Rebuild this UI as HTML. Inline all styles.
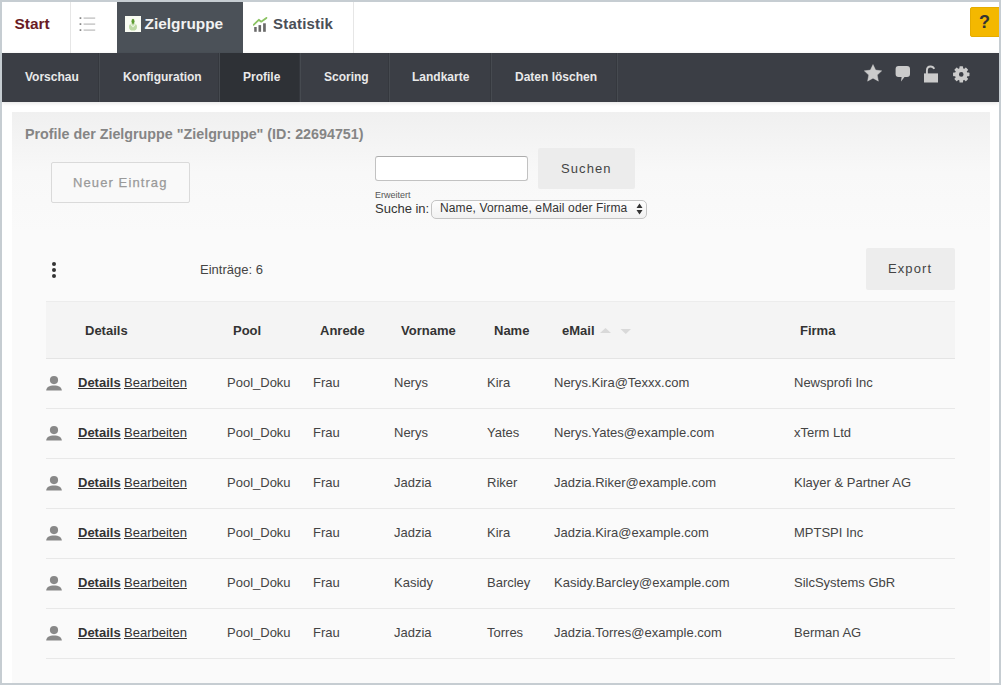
<!DOCTYPE html>
<html><head><meta charset="utf-8">
<style>
*{box-sizing:border-box;margin:0;padding:0}
html,body{width:1001px;height:685px;overflow:hidden;background:#fff;font-family:"Liberation Sans",sans-serif}
#frame{position:absolute;left:0;top:0;width:1001px;height:685px;border:2px solid #c6cdd2;background:#fff;overflow:hidden}
.abs{position:absolute;white-space:nowrap}
#topbar{position:absolute;left:0;top:0;width:997px;height:51px;background:#fff}
#nav{position:absolute;left:0;top:51px;width:997px;height:49px;background:#3b3e45;box-shadow:0 1px 4px rgba(0,0,0,0.12);z-index:2}
.navsep{position:absolute;top:0;width:1px;height:49px;background:#464a50;box-shadow:-1px 0 0 #35383e}
.navt{position:absolute;top:16.5px;font-size:12px;font-weight:bold;color:#e9e9e9;line-height:14px}
#panel{position:absolute;left:10px;top:110px;width:978px;height:571px;background:linear-gradient(#f0f0f0 0px,#f8f8f8 60px,#fafafa 120px,#fafafa 100%)}
.btn{position:absolute;background:#ededed;font-size:13px;color:#444;letter-spacing:1px;text-align:center}
.th{position:absolute;top:23px;font-size:13px;font-weight:bold;color:#333;line-height:15px}
.row{position:absolute;left:34px;width:910px;height:50px;border-bottom:1px solid #e6e6e6}
.td{position:absolute;top:12px;font-size:13px;color:#444;line-height:15px}
.lnk{text-decoration:underline;color:#333}
</style></head><body>
<div id="frame">
  <div id="topbar">
    <div class="abs" style="left:12.5px;top:12.5px;font-size:15.4px;font-weight:bold;color:#6a1b24;line-height:17px">Start</div>
    <div class="abs" style="left:68px;top:0;width:1px;height:51px;background:#e6e6e6"></div>
    <!-- list icon -->
    <svg class="abs" style="left:76px;top:13px" width="18" height="17" viewBox="0 0 18 17">
      <rect x="1.6" y="2.2" width="1.7" height="1.8" fill="#8a8a8a"/><rect x="5.6" y="2.5" width="11.6" height="1.2" fill="#b9b9b9"/>
      <rect x="1.6" y="8.2" width="1.7" height="1.8" fill="#8a8a8a"/><rect x="5.6" y="8.5" width="11.6" height="1.2" fill="#b9b9b9"/>
      <rect x="1.6" y="14.2" width="1.7" height="1.8" fill="#8a8a8a"/><rect x="5.6" y="14.5" width="11.6" height="1.2" fill="#b9b9b9"/>
    </svg>
    <div class="abs" style="left:115px;top:0;width:126px;height:51px;background:#4b5158"></div>
    <svg class="abs" style="left:123px;top:14px" width="16" height="16" viewBox="0 0 16 16">
      <rect width="16" height="16" fill="#f9fcf3"/>
      <ellipse cx="8" cy="10.9" rx="4" ry="3.7" fill="#bcd9a4"/>
      <path d="M5.6 8.2 L8 10.8 L10.4 8.2" stroke="#eef6e6" stroke-width="1.1" fill="none"/>
      <ellipse cx="8" cy="5.3" rx="1.5" ry="2.6" fill="#5c9b30"/>
    </svg>
    <div class="abs" style="left:142.5px;top:12.5px;font-size:15.4px;font-weight:bold;color:#f2f2f2;line-height:17px">Zielgruppe</div>
    <svg class="abs" style="left:251px;top:15px" width="16" height="16" viewBox="0 0 16 16">
      <rect x="1.2" y="10" width="2.5" height="4.8" fill="#6a6a6a"/><rect x="5.5" y="8.1" width="2.6" height="6.7" fill="#6a6a6a"/><rect x="10.1" y="6.3" width="2.7" height="8.5" fill="#6a6a6a"/>
      <path d="M0.6 7.8 L5.8 2.8 L8.2 4.7 L13.4 0.9" stroke="#8cc363" stroke-width="1.8" fill="none" stroke-linejoin="round" stroke-linecap="round"/>
    </svg>
    <div class="abs" style="left:271px;top:13px;font-size:15px;font-weight:bold;color:#4a4f57;line-height:17px;letter-spacing:0.2px">Statistik</div>
    <div class="abs" style="left:351px;top:0;width:1px;height:51px;background:#e6e6e6"></div>
    <div class="abs" style="left:968px;top:5px;width:32px;height:30px;background:#f4b800;border-radius:2px;border:1px solid #e5ac00"></div>
    <div class="abs" style="left:977px;top:10px;font-size:18px;font-weight:bold;color:#333;line-height:20px">?</div>
  </div>
  <div id="nav">
    <div class="navt" style="left:23px">Vorschau</div>
    <div class="navsep" style="left:97px"></div>
    <div class="navt" style="left:121px">Konfiguration</div>
    <div class="navsep" style="left:217px"></div>
    <div class="abs" style="left:218px;top:0;width:80px;height:49px;background:#2e3136"></div>
    <div class="navt" style="left:241px">Profile</div>
    <div class="navsep" style="left:298px"></div>
    <div class="navt" style="left:322px">Scoring</div>
    <div class="navsep" style="left:387px"></div>
    <div class="navt" style="left:410px">Landkarte</div>
    <div class="navsep" style="left:489px"></div>
    <div class="navt" style="left:513px">Daten löschen</div>
    <div class="navsep" style="left:615px"></div>
    <svg class="abs" style="left:861px;top:11px" width="20" height="19" viewBox="0 0 20 19"><path d="M10.00 0.50 L12.65 6.06 L18.75 6.86 L14.28 11.09 L15.41 17.14 L10.00 14.20 L4.59 17.14 L5.72 11.09 L1.25 6.86 L7.35 6.06 Z" fill="#cbcbcb" stroke="#cbcbcb" stroke-width="0.4" stroke-linejoin="round"/></svg>
    <svg class="abs" style="left:893px;top:12px" width="16" height="17" viewBox="0 0 16 17"><path d="M3.5 1 H12 Q15 1 15 4 V9 Q15 12 12 12 H9.5 L6 16.5 L6.6 12 H3.5 Q0.6 12 0.6 9 V4 Q0.6 1 3.5 1 Z" fill="#cbcbcb"/></svg>
    <svg class="abs" style="left:921px;top:12px" width="17" height="18" viewBox="0 0 17 18"><path d="M3.9 9 V5.4 Q3.9 1.5 7.6 1.5 Q10.3 1.5 11.2 3.8" stroke="#cbcbcb" stroke-width="1.9" fill="none"/><rect x="1" y="8.4" width="14" height="9.1" fill="#cbcbcb"/></svg>
    <svg class="abs" style="left:951px;top:13px" width="18" height="18" viewBox="0 0 18 18"><g fill="#cbcbcb"><rect x="6.45" y="0.20" width="3.6" height="4" rx="0.6" transform="rotate(0 8.25 8.4)"/><rect x="6.45" y="0.20" width="3.6" height="4" rx="0.6" transform="rotate(45 8.25 8.4)"/><rect x="6.45" y="0.20" width="3.6" height="4" rx="0.6" transform="rotate(90 8.25 8.4)"/><rect x="6.45" y="0.20" width="3.6" height="4" rx="0.6" transform="rotate(135 8.25 8.4)"/><rect x="6.45" y="0.20" width="3.6" height="4" rx="0.6" transform="rotate(180 8.25 8.4)"/><rect x="6.45" y="0.20" width="3.6" height="4" rx="0.6" transform="rotate(225 8.25 8.4)"/><rect x="6.45" y="0.20" width="3.6" height="4" rx="0.6" transform="rotate(270 8.25 8.4)"/><rect x="6.45" y="0.20" width="3.6" height="4" rx="0.6" transform="rotate(315 8.25 8.4)"/></g><circle cx="8.25" cy="8.4" r="4.3" fill="none" stroke="#cbcbcb" stroke-width="4"/></svg>

  </div>
  <div id="panel">
<div class="abs" style="left:13px;top:14px;font-size:14.3px;font-weight:bold;color:#858585;line-height:16px">Profile der Zielgruppe "Zielgruppe" (ID: 22694751)</div>
<div class="abs" style="left:39px;top:50px;width:139px;height:41px;border:1px solid #dadada;border-radius:2px;background:#f9f9f9"></div>
<div class="abs" style="left:61px;top:62.5px;font-size:13px;color:#9a9a9a;letter-spacing:1.1px;-webkit-text-stroke:0.25px #9a9a9a;line-height:15px">Neuer Eintrag</div>
<div class="abs" style="left:362.5px;top:44px;width:153.5px;height:25px;border:1px solid #c2c2c2;border-top-color:#acacac;border-radius:3px;background:#fff"></div>
<div class="abs" style="left:526px;top:36px;width:97px;height:41px;background:#ececec;border-radius:2px"></div>
<div class="abs" style="left:549px;top:49px;font-size:13px;color:#444;letter-spacing:1.1px;line-height:15px">Suchen</div>
<div class="abs" style="left:363px;top:78px;font-size:9px;color:#555;line-height:10px">Erweitert</div>
<div class="abs" style="left:363px;top:89px;font-size:13px;color:#333;line-height:15px">Suche in:</div>
<div class="abs" style="left:419px;top:88px;width:216px;height:19px;border:1px solid #c4c4c4;border-radius:5px;background:linear-gradient(#fdfdfd,#f1f1f1)"></div>
<div class="abs" style="left:428px;top:89px;font-size:12px;letter-spacing:0.13px;color:#333;line-height:14px">Name, Vorname, eMail oder Firma</div>
<svg class="abs" style="left:624px;top:91px" width="7" height="12" viewBox="0 0 7 12"><path d="M3.5 0.5 L6.5 5 L0.5 5 Z M0.5 7 L6.5 7 L3.5 11.5 Z" fill="#333"/></svg>
<div class="abs" style="left:40px;top:149.6px;width:4px;height:4px;border-radius:50%;background:#333"></div>
<div class="abs" style="left:40px;top:156.0px;width:4px;height:4px;border-radius:50%;background:#333"></div>
<div class="abs" style="left:40px;top:162.0px;width:4px;height:4px;border-radius:50%;background:#333"></div>
<div class="abs" style="left:188px;top:150px;font-size:13px;color:#444;line-height:15px">Einträge: 6</div>
<div class="abs" style="left:854px;top:136px;width:89px;height:42px;background:#ededed;border-radius:2px"></div>
<div class="abs" style="left:876px;top:149px;font-size:13px;color:#444;letter-spacing:1.1px;line-height:15px">Export</div>
<div class="abs" style="left:34px;top:189px;width:909px;height:58px;background:#f4f4f4;border-top:1px solid #ececec;border-bottom:1px solid #e4e4e4"></div>
<div class="th" style="left:73px;top:211px">Details</div>
<div class="th" style="left:221px;top:211px">Pool</div>
<div class="th" style="left:308px;top:211px">Anrede</div>
<div class="th" style="left:389px;top:211px">Vorname</div>
<div class="th" style="left:482px;top:211px">Name</div>
<div class="th" style="left:550px;top:211px">eMail</div>
<div class="th" style="left:788px;top:211px">Firma</div>
<svg class="abs" style="left:588px;top:215px" width="32" height="8" viewBox="0 0 32 8"><path d="M0 6 L5.5 1 L11 6 Z" fill="#d9d9d9"/><path d="M20.5 2 L31 2 L25.75 7 Z" fill="#d9d9d9"/></svg>
<div class="abs" style="left:34px;top:296px;width:909px;height:1px;background:#e8e8e8"></div>
<svg class="abs" style="left:34px;top:264px" width="16" height="15" viewBox="0 0 16 15"><circle cx="8" cy="4.1" r="4.1" fill="#888"/><path d="M0.2 14.5 C0.2 11.3 3.2 9.4 8 9.4 C12.8 9.4 15.8 11.3 15.8 14.5 Z" fill="#888"/></svg>
<div class="td" style="left:66px;top:263px"><span class="lnk" style="font-weight:bold">Details</span></div>
<div class="td" style="left:112px;top:263px"><span class="lnk">Bearbeiten</span></div>
<div class="td" style="left:215px;top:263px">Pool_Doku</div>
<div class="td" style="left:301px;top:263px">Frau</div>
<div class="td" style="left:382px;top:263px">Nerys</div>
<div class="td" style="left:475px;top:263px">Kira</div>
<div class="td" style="left:542px;top:263px">Nerys.Kira@Texxx.com</div>
<div class="td" style="left:782px;top:263px">Newsprofi Inc</div>
<div class="abs" style="left:34px;top:346px;width:909px;height:1px;background:#e8e8e8"></div>
<svg class="abs" style="left:34px;top:314px" width="16" height="15" viewBox="0 0 16 15"><circle cx="8" cy="4.1" r="4.1" fill="#888"/><path d="M0.2 14.5 C0.2 11.3 3.2 9.4 8 9.4 C12.8 9.4 15.8 11.3 15.8 14.5 Z" fill="#888"/></svg>
<div class="td" style="left:66px;top:313px"><span class="lnk" style="font-weight:bold">Details</span></div>
<div class="td" style="left:112px;top:313px"><span class="lnk">Bearbeiten</span></div>
<div class="td" style="left:215px;top:313px">Pool_Doku</div>
<div class="td" style="left:301px;top:313px">Frau</div>
<div class="td" style="left:382px;top:313px">Nerys</div>
<div class="td" style="left:475px;top:313px">Yates</div>
<div class="td" style="left:542px;top:313px">Nerys.Yates@example.com</div>
<div class="td" style="left:782px;top:313px">xTerm Ltd</div>
<div class="abs" style="left:34px;top:396px;width:909px;height:1px;background:#e8e8e8"></div>
<svg class="abs" style="left:34px;top:364px" width="16" height="15" viewBox="0 0 16 15"><circle cx="8" cy="4.1" r="4.1" fill="#888"/><path d="M0.2 14.5 C0.2 11.3 3.2 9.4 8 9.4 C12.8 9.4 15.8 11.3 15.8 14.5 Z" fill="#888"/></svg>
<div class="td" style="left:66px;top:363px"><span class="lnk" style="font-weight:bold">Details</span></div>
<div class="td" style="left:112px;top:363px"><span class="lnk">Bearbeiten</span></div>
<div class="td" style="left:215px;top:363px">Pool_Doku</div>
<div class="td" style="left:301px;top:363px">Frau</div>
<div class="td" style="left:382px;top:363px">Jadzia</div>
<div class="td" style="left:475px;top:363px">Riker</div>
<div class="td" style="left:542px;top:363px">Jadzia.Riker@example.com</div>
<div class="td" style="left:782px;top:363px">Klayer &amp; Partner AG</div>
<div class="abs" style="left:34px;top:446px;width:909px;height:1px;background:#e8e8e8"></div>
<svg class="abs" style="left:34px;top:414px" width="16" height="15" viewBox="0 0 16 15"><circle cx="8" cy="4.1" r="4.1" fill="#888"/><path d="M0.2 14.5 C0.2 11.3 3.2 9.4 8 9.4 C12.8 9.4 15.8 11.3 15.8 14.5 Z" fill="#888"/></svg>
<div class="td" style="left:66px;top:413px"><span class="lnk" style="font-weight:bold">Details</span></div>
<div class="td" style="left:112px;top:413px"><span class="lnk">Bearbeiten</span></div>
<div class="td" style="left:215px;top:413px">Pool_Doku</div>
<div class="td" style="left:301px;top:413px">Frau</div>
<div class="td" style="left:382px;top:413px">Jadzia</div>
<div class="td" style="left:475px;top:413px">Kira</div>
<div class="td" style="left:542px;top:413px">Jadzia.Kira@example.com</div>
<div class="td" style="left:782px;top:413px">MPTSPI Inc</div>
<div class="abs" style="left:34px;top:496px;width:909px;height:1px;background:#e8e8e8"></div>
<svg class="abs" style="left:34px;top:464px" width="16" height="15" viewBox="0 0 16 15"><circle cx="8" cy="4.1" r="4.1" fill="#888"/><path d="M0.2 14.5 C0.2 11.3 3.2 9.4 8 9.4 C12.8 9.4 15.8 11.3 15.8 14.5 Z" fill="#888"/></svg>
<div class="td" style="left:66px;top:463px"><span class="lnk" style="font-weight:bold">Details</span></div>
<div class="td" style="left:112px;top:463px"><span class="lnk">Bearbeiten</span></div>
<div class="td" style="left:215px;top:463px">Pool_Doku</div>
<div class="td" style="left:301px;top:463px">Frau</div>
<div class="td" style="left:382px;top:463px">Kasidy</div>
<div class="td" style="left:475px;top:463px">Barcley</div>
<div class="td" style="left:542px;top:463px">Kasidy.Barcley@example.com</div>
<div class="td" style="left:782px;top:463px">SilcSystems GbR</div>
<div class="abs" style="left:34px;top:546px;width:909px;height:1px;background:#e8e8e8"></div>
<svg class="abs" style="left:34px;top:514px" width="16" height="15" viewBox="0 0 16 15"><circle cx="8" cy="4.1" r="4.1" fill="#888"/><path d="M0.2 14.5 C0.2 11.3 3.2 9.4 8 9.4 C12.8 9.4 15.8 11.3 15.8 14.5 Z" fill="#888"/></svg>
<div class="td" style="left:66px;top:513px"><span class="lnk" style="font-weight:bold">Details</span></div>
<div class="td" style="left:112px;top:513px"><span class="lnk">Bearbeiten</span></div>
<div class="td" style="left:215px;top:513px">Pool_Doku</div>
<div class="td" style="left:301px;top:513px">Frau</div>
<div class="td" style="left:382px;top:513px">Jadzia</div>
<div class="td" style="left:475px;top:513px">Torres</div>
<div class="td" style="left:542px;top:513px">Jadzia.Torres@example.com</div>
<div class="td" style="left:782px;top:513px">Berman AG</div>
</div>
</div>
</body></html>
